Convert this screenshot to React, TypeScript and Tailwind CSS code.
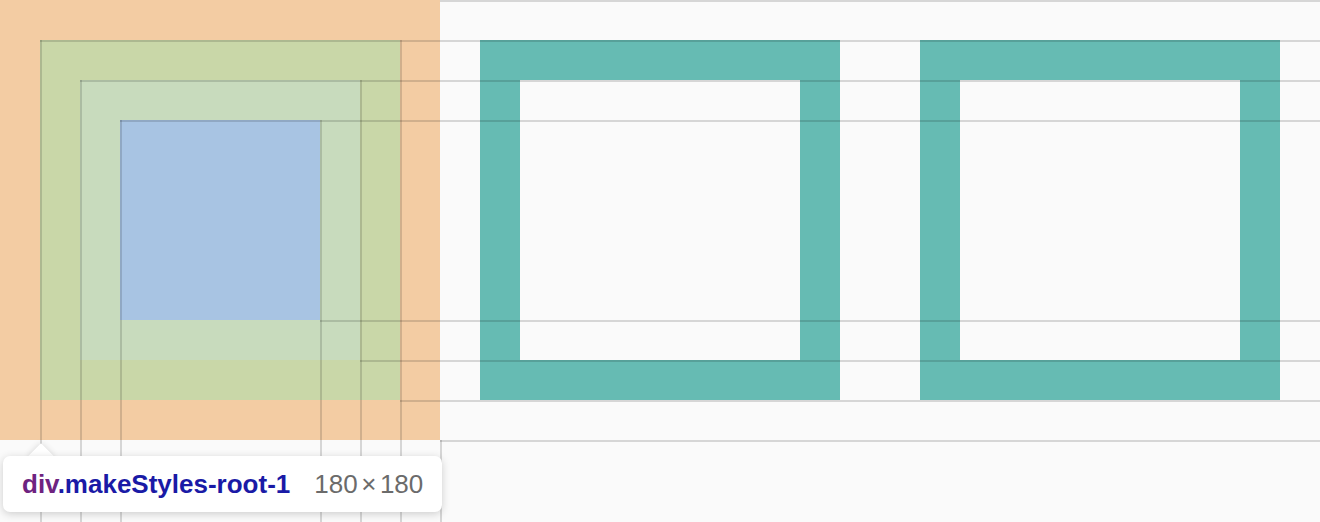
const hLines = [
  { y: 0, x: 440 },
  { y: 40, x: 40 },
  { y: 80, x: 80 },
  { y: 120, x: 120 },
  { y: 320, x: 320 },
  { y: 360, x: 360 },
  { y: 400, x: 400 },
  { y: 440, x: 440 },
];

const vLines = [
  { x: 40, y: 40 },
  { x: 80, y: 80 },
  { x: 120, y: 120 },
  { x: 320, y: 120 },
  { x: 360, y: 80 },
  { x: 400, y: 40 },
  { x: 440, y: 440 },
];

function Box() {
  return <div className="m-[40px] h-[360px] w-[360px] shrink-0 border-[40px] border-[#66bbb3]" />;
}

// devtools-style box model overlay for the first element
function Highlight() {
  return (
    <div className="absolute left-0 top-0 h-[440px] w-[440px] bg-[#f3cca3] p-[40px]">
      <div className="h-full w-full bg-[#c9d7a8] p-[40px]">
        <div className="h-full w-full bg-[#c8dbbd] p-[40px]">
          <div className="h-full w-full bg-[#a8c4e3]" />
        </div>
      </div>
    </div>
  );
}

function Guides() {
  return (
    <svg className="pointer-events-none absolute inset-0" width={1320} height={522}>
      {hLines.map((l) => (
        <rect key={"h" + l.y} x={l.x} y={l.y} width={1320 - l.x} height={2} fill="rgba(0,0,0,0.14)" />
      ))}
      {vLines.map((l) => (
        <rect key={"v" + l.x} x={l.x} y={l.y} width={2} height={522 - l.y} fill="rgba(0,0,0,0.14)" />
      ))}
    </svg>
  );
}

function Tooltip() {
  return (
    <div className="absolute left-[3px] top-[456px] font-['Liberation_Sans',Arial,sans-serif]">
      <div className="absolute left-[29px] top-[-9px] h-[18px] w-[18px] rotate-45 bg-white shadow-[0_0_6px_rgba(0,0,0,0.15)]" />
      <div className="relative flex h-[56px] w-[439px] items-center whitespace-nowrap rounded-[7px] bg-white pl-[19px] shadow-[0_2px_8px_rgba(0,0,0,0.18)]">
        <div className="absolute left-[22px] top-0 h-[12px] w-[30px] bg-white" />
        <span className="relative shrink-0 text-[26px] font-bold text-[#1a1aa6]">
          <span className="text-[#6e2380]">div</span>.makeStyles-root-1
        </span>
        <span className="relative ml-[24px] shrink-0 text-[26px] text-[#6b6b6b]">
          180<span className="mx-[3.5px]">×</span>180
        </span>
      </div>
    </div>
  );
}

export default function App() {
  return (
    <div className="relative h-[522px] w-[1320px] overflow-hidden bg-[#fafafa]">
      <div className="flex">
        <Box />
        <Box />
        <Box />
      </div>
      <Highlight />
      <Guides />
      <Tooltip />
    </div>
  );
}
